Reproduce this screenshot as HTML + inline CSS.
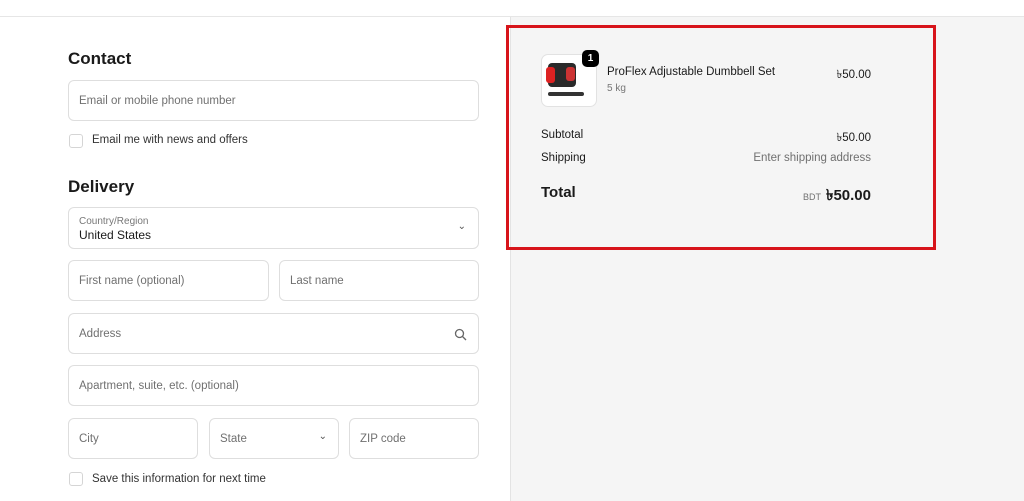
<!DOCTYPE html><html><head><style>
body{margin:0;width:1024px;height:501px;overflow:hidden;background:#fff;font-family:"Liberation Sans",sans-serif;color:#1a1a1a;position:relative}
.a{position:absolute}
.in{position:absolute;border:1px solid #dedede;border-radius:6px;background:#fff;box-sizing:border-box;font-size:11.5px;color:#707070}
.in span{position:absolute;left:10px;top:50%;transform:translateY(-50%)}
.cb{position:absolute;width:14px;height:14px;border:1px solid #d5d5d5;border-radius:3px;box-sizing:border-box}
.t{font-size:11.5px;position:absolute}
.r{position:absolute;right:153px;font-size:11.5px;text-align:right}
</style></head><body>
<div class="a" style="left:0;top:16px;width:1024px;height:1px;background:#e6e6e6"></div>
<div class="a" style="left:510px;top:17px;width:514px;height:484px;background:#f5f5f5;border-left:1px solid #e3e3e3"></div>
<div class="a" style="left:68px;top:49px;font-size:17px;font-weight:bold">Contact</div>
<div class="in" style="left:68px;top:80px;width:411px;height:41px"><span>Email or mobile phone number</span></div>
<div class="cb" style="left:69px;top:134px"></div>
<div class="t" style="left:92px;top:134px;color:#333">Email me with news and offers</div>
<div class="a" style="left:68px;top:177px;font-size:17px;font-weight:bold">Delivery</div>
<div class="in" style="left:68px;top:207px;width:411px;height:42px"><div class="a" style="left:10px;top:8px;font-size:10px;color:#777">Country/Region</div><div class="a" style="left:10px;top:20px;font-size:12px;color:#1a1a1a">United States</div><div class="a" style="right:12px;top:13px;font-size:10px;color:#555">&#8964;</div></div>
<div class="in" style="left:68px;top:260px;width:201px;height:41px"><span>First name (optional)</span></div>
<div class="in" style="left:279px;top:260px;width:200px;height:41px"><span>Last name</span></div>
<div class="in" style="left:68px;top:313px;width:411px;height:41px"><span>Address</span>
<svg class="a" style="right:11px;top:14px" width="13" height="13" viewBox="0 0 13 13"><circle cx="5.5" cy="5.5" r="4" fill="none" stroke="#666" stroke-width="1.3"/><path d="M8.5 8.5L12 12" stroke="#666" stroke-width="1.3"/></svg></div>
<div class="in" style="left:68px;top:365px;width:411px;height:41px"><span>Apartment, suite, etc. (optional)</span></div>
<div class="in" style="left:68px;top:418px;width:130px;height:41px"><span>City</span></div>
<div class="in" style="left:209px;top:418px;width:130px;height:41px"><span>State</span><div class="a" style="right:11px;top:12px;font-size:10px;color:#555">&#8964;</div></div>
<div class="in" style="left:349px;top:418px;width:130px;height:41px"><span>ZIP code</span></div>
<div class="cb" style="left:69px;top:472px"></div>
<div class="t" style="left:92px;top:473px;color:#333">Save this information for next time</div>

<div class="a" style="left:506px;top:25px;width:424px;height:219px;border:3px solid #d7141a"></div>
<div class="a" style="left:541px;top:54px;width:54px;height:51px;background:#fff;border:1px solid #e2e2e2;border-radius:7px;overflow:hidden">
<div class="a" style="left:6px;top:8px;width:28px;height:24px;background:#2a2a2a;border-radius:4px"></div>
<div class="a" style="left:4px;top:12px;width:9px;height:16px;background:#d22;border-radius:3px"></div>
<div class="a" style="left:24px;top:12px;width:9px;height:14px;background:#c33;border-radius:3px"></div>
<div class="a" style="left:6px;top:37px;width:36px;height:4px;background:#333;border-radius:2px"></div>
</div>
<div class="a" style="left:582px;top:50px;width:17px;height:17px;background:#000;color:#fff;border-radius:5px;font-size:10px;font-weight:bold;text-align:center;line-height:17px">1</div>
<div class="t" style="left:607px;top:66px">ProFlex Adjustable Dumbbell Set</div>
<div class="a" style="left:607px;top:83px;font-size:10px;color:#777">5 kg</div>
<div class="r" style="top:66px">৳50.00</div>
<div class="t" style="left:541px;top:129px">Subtotal</div>
<div class="r" style="top:129px">৳50.00</div>
<div class="t" style="left:541px;top:152px">Shipping</div>
<div class="r" style="top:152px;color:#707070">Enter shipping address</div>
<div class="a" style="left:541px;top:184px;font-size:15px;font-weight:bold">Total</div>
<div class="a" style="right:153px;top:184px;font-size:15px;font-weight:bold"><span style="font-size:9px;font-weight:normal;color:#707070;margin-right:5px">BDT</span>৳50.00</div>
</body></html>
